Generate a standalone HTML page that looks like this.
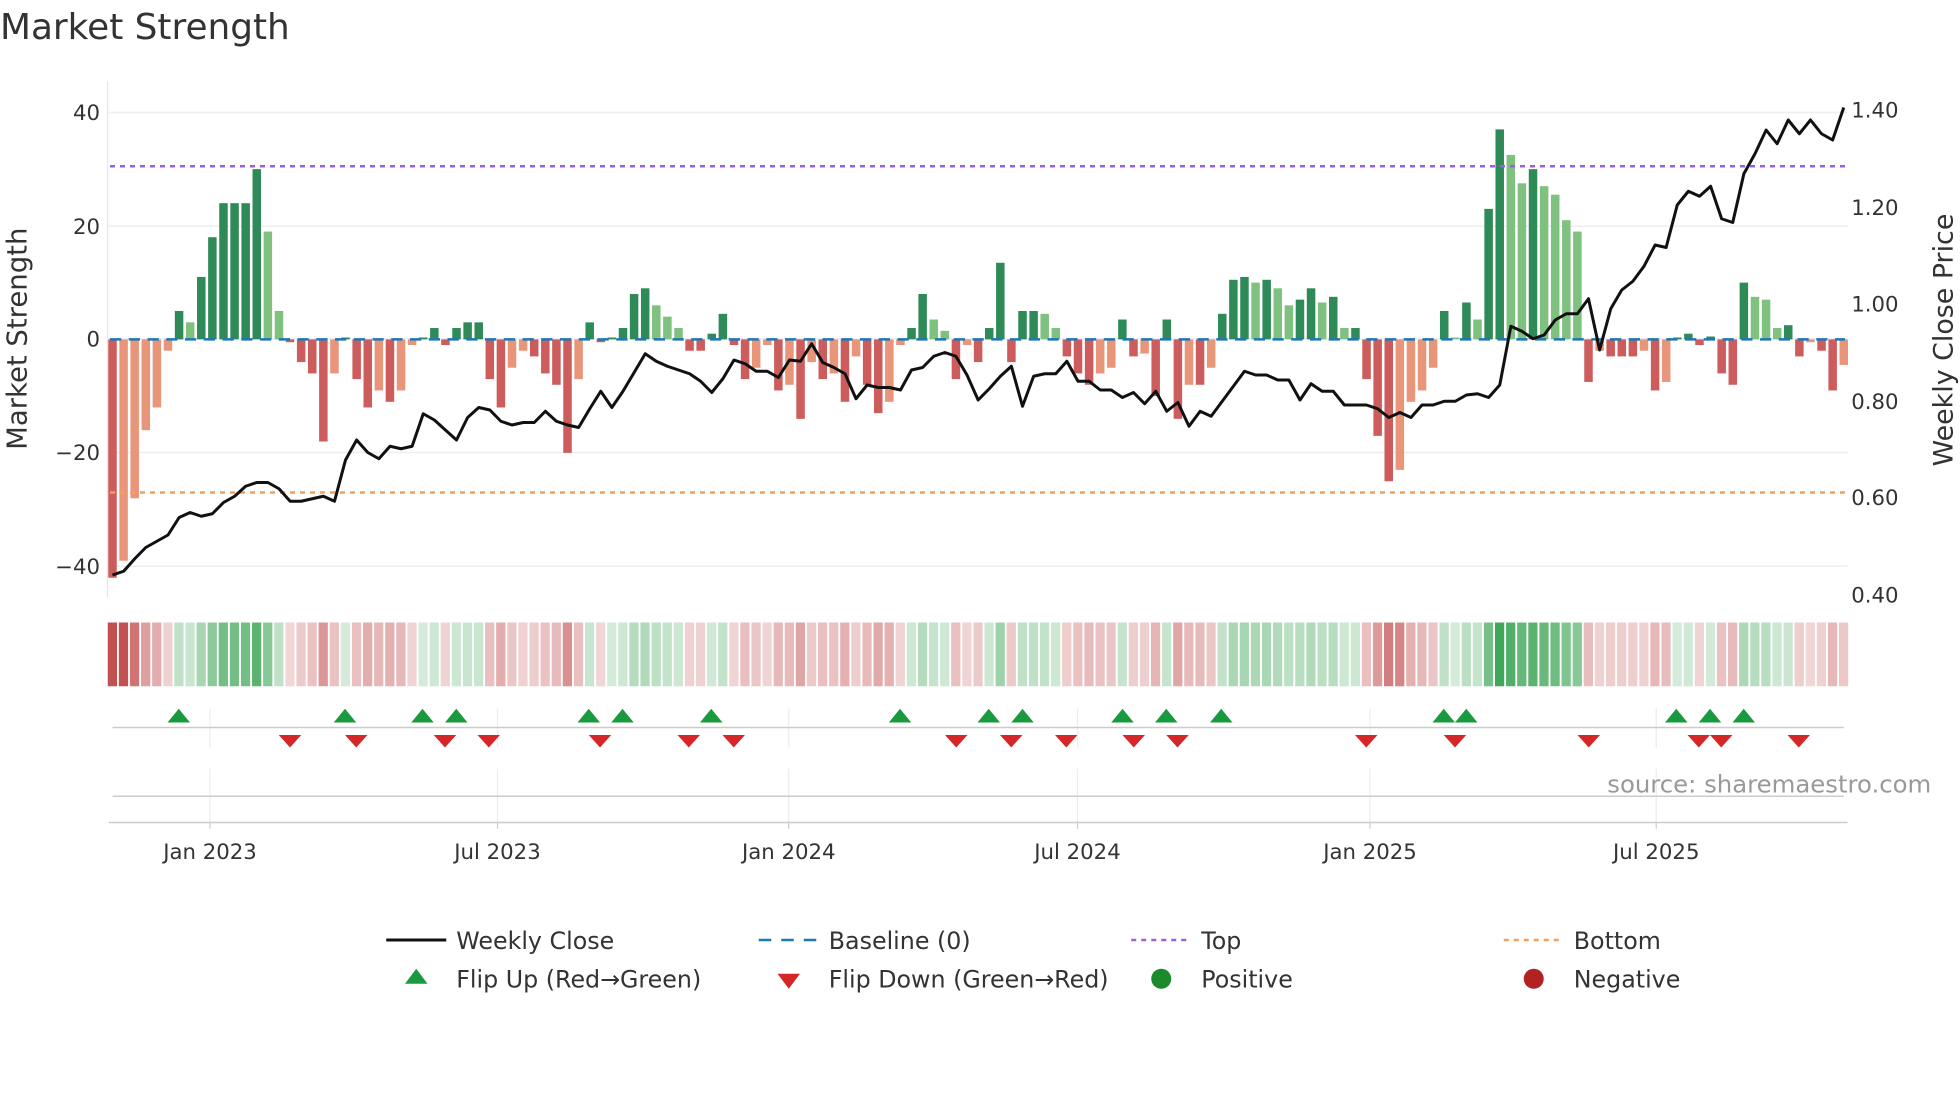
<!DOCTYPE html>
<html><head><meta charset="utf-8"><style>
html,body{margin:0;padding:0;background:#fff;width:1960px;height:1102px;overflow:hidden}
svg{display:block}
text{font-family:"DejaVu Sans","Liberation Sans",sans-serif;fill:#333}
</style></head><body>
<svg id="s" width="1960" height="1102" viewBox="0 0 1568 881.6" xmlns="http://www.w3.org/2000/svg">
<text x="0" y="31" font-size="28.7">Market Strength</text>
<g stroke="#eeeef3" stroke-width="1.2">
<line x1="87" y1="90" x2="1478" y2="90"/><line x1="87" y1="181" x2="1478" y2="181"/>
<line x1="87" y1="362" x2="1478" y2="362"/><line x1="87" y1="453" x2="1478" y2="453"/>
<line x1="87" y1="271" x2="1478" y2="271"/>
</g>
<line x1="86" y1="65" x2="86" y2="478" stroke="#e6e6ea" stroke-width="1"/>
<g id="bars"></g>
<line x1="88" y1="271.5" x2="1476" y2="271.5" stroke="#1f77b4" stroke-width="2" stroke-dasharray="9,6"/>
<line x1="88" y1="133" x2="1476" y2="133" stroke="#9b5fe0" stroke-width="2" stroke-dasharray="4,4"/>
<line x1="88" y1="394" x2="1476" y2="394" stroke="#f0a060" stroke-width="2" stroke-dasharray="4,4"/>
<polyline id="price" fill="none" stroke="#111" stroke-width="2.4" stroke-linejoin="round"/>
<g font-size="17">
<text x="80" y="96" text-anchor="end">40</text><text x="80" y="187" text-anchor="end">20</text>
<text x="80" y="277" text-anchor="end">0</text><text x="80" y="368" text-anchor="end">−20</text>
<text x="80" y="459" text-anchor="end">−40</text>
<text x="1481" y="94">1.40</text><text x="1481" y="172">1.20</text><text x="1481" y="249">1.00</text>
<text x="1481" y="327">0.80</text><text x="1481" y="404">0.60</text><text x="1481" y="482">0.40</text>
</g>
<text transform="translate(21,271) rotate(-90)" font-size="22" text-anchor="middle">Market Strength</text>
<text transform="translate(1562,272) rotate(-90)" font-size="21.5" text-anchor="middle">Weekly Close Price</text>
<g id="heat"></g>
<g stroke="#ececef" stroke-width="1">
<line x1="168" y1="567" x2="168" y2="598"/><line x1="398" y1="567" x2="398" y2="598"/><line x1="631" y1="567" x2="631" y2="598"/>
<line x1="862" y1="567" x2="862" y2="598"/><line x1="1096" y1="567" x2="1096" y2="598"/><line x1="1325" y1="567" x2="1325" y2="598"/>
<line x1="168" y1="615" x2="168" y2="658"/><line x1="398" y1="615" x2="398" y2="658"/><line x1="631" y1="615" x2="631" y2="658"/>
<line x1="862" y1="615" x2="862" y2="658"/><line x1="1096" y1="615" x2="1096" y2="658"/><line x1="1325" y1="615" x2="1325" y2="658"/>
</g>
<line x1="90" y1="582" x2="1475" y2="582" stroke="#ccc" stroke-width="1.2"/>
<line x1="90" y1="637" x2="1475" y2="637" stroke="#ccc" stroke-width="1.2"/>
<line x1="87" y1="658" x2="1478" y2="658" stroke="#ccc" stroke-width="1.2"/>
<g stroke="#ccc"><line x1="168" y1="658" x2="168" y2="663"/><line x1="398" y1="658" x2="398" y2="663"/><line x1="631" y1="658" x2="631" y2="663"/><line x1="862" y1="658" x2="862" y2="663"/><line x1="1096" y1="658" x2="1096" y2="663"/><line x1="1325" y1="658" x2="1325" y2="663"/></g>
<g id="marks"></g>
<text x="1545" y="634" font-size="19.5" fill="#999" style="fill:#999" text-anchor="end">source: sharemaestro.com</text>
<g font-size="17" text-anchor="middle">
<text x="168" y="687">Jan 2023</text><text x="398" y="687">Jul 2023</text><text x="631" y="687">Jan 2024</text>
<text x="862" y="687">Jul 2024</text><text x="1096" y="687">Jan 2025</text><text x="1325" y="687">Jul 2025</text>
</g>
<g font-size="19">
<line x1="309" y1="752" x2="357" y2="752" stroke="#111" stroke-width="2.4"/><text x="365" y="759">Weekly Close</text>
<line x1="607" y1="752" x2="655" y2="752" stroke="#1f77b4" stroke-width="2" stroke-dasharray="10,8"/><text x="663" y="759">Baseline (0)</text>
<line x1="905" y1="752" x2="953" y2="752" stroke="#9b5fe0" stroke-width="2" stroke-dasharray="4,4"/><text x="961" y="759">Top</text>
<line x1="1203" y1="752" x2="1251" y2="752" stroke="#f0a060" stroke-width="2" stroke-dasharray="4,4"/><text x="1259" y="759">Bottom</text>
<polygon points="324,787 333,775 342,787" fill="#1a9a3e"/><text x="365" y="790">Flip Up (Red→Green)</text>
<polygon points="622,779 640,779 631,791" fill="#d62728"/><text x="663" y="790">Flip Down (Green→Red)</text>
<circle cx="929" cy="783" r="8" fill="#1a8a2a"/><text x="961" y="790">Positive</text>
<circle cx="1227" cy="783" r="8" fill="#b22222"/><text x="1259" y="790">Negative</text>
</g>
</svg>
<script>
var v=[-42,-39,-28,-16,-12,-2,5,3,11,18,24,24,24,30,19,5,-0.5,-4,-6,-18,-6,0,-7,-12,-9,-11,-9,-1,0,2,-1,2,3,3,-7,-12,-5,-2,-3,-6,-8,-20,-7,3,-0.5,0,2,8,9,6,4,2,-2,-2,1,4.5,-1,-7,-5,-1,-9,-8,-14,-4,-7,-6,-11,-3,-8,-13,-11,-1,2,8,3.5,1.5,-7,-1,-4,2,13.5,-4,5,5,4.5,2,-3,-6,-8,-6,-5,3.5,-3,-2.5,-10,3.5,-14,-8,-8,-5,4.5,10.5,11,10,10.5,9,6,7,9,6.5,7.5,2,2,-7,-17,-25,-23,-11,-9,-5,5,0,6.5,3.5,23,37,32.5,27.5,30,27,25.5,21,19,-7.5,-2,-3,-3,-3,-2,-9,-7.5,0,1,-1,0.5,-6,-8,10,7.5,7,2,2.5,-3,-0.5,-2,-9,-4.5];
var p=[460,457,447,438,433,428,414,410,413,411,402,397,389,386,386,391,401,401,399,397,401,368,352,362,367,357,359,357,331,336,344,352,334,326,328,337,340,338,338,329,337,340,342,327,313,326,313,298,283,289,293,296,299,305,314,303,288,291,297,297,302,288,289,275,290,294,299,319,308,310,310,312,296,294,285,282,285,300,320,311,301,293,325,301,299,299,289,305,305,312,312,318,314,323,313,329,322,341,329,333,321,309,297,300,300,304,304,320,307,313,313,324,324,324,327,334,330,334,324,324,321,321,316,315,318,308,261,265,271,268,256,251,251,239,280,247,232,225,213,196,198,164,153,157,149,175,178,139,123,104,115,96,107,96,107,112,86];
var N=v.length,x0=90,dx=(1475-90)/(N-1),z=271.5,k=4.54,ns="http://www.w3.org/2000/svg";
function el(t,a,par){var e=document.createElementNS(ns,t);for(var q in a)e.setAttribute(q,a[q]);document.getElementById(par).appendChild(e);return e;}
for(var i=0;i<N;i++){var x=x0+i*dx,val=v[i],pv=i?v[i-1]:0,c;
 if(val>=0)c=(val>=pv)?"#2e8b57":"#7fc17f";else c=(val<=pv)?"#cd5c5c":"#e8957a";
 var h=Math.abs(val)*k; if(h<1.5)h=1.5;
 el("rect",{x:x-3.4,y:val>=0?z-h:z,width:6.8,height:h,fill:c},"bars");
 var t=Math.min(1,0.22+0.78*Math.abs(val)/38),r,g,b;
 if(val>=0){r=255+(60-255)*t;g=255+(165-255)*t;b=255+(85-255)*t;}else{r=255+(195-255)*t;g=255+(80-255)*t;b=255+(80-255)*t;}
 el("rect",{x:x-3.8,y:498,width:7.4,height:51,fill:"rgb("+(r|0)+","+(g|0)+","+(b|0)+")"},"heat");}
var pts=[];for(var i=0;i<p.length;i++)pts.push((x0+i*(1475-90)/(p.length-1)).toFixed(1)+","+p[i]);
document.getElementById("price").setAttribute("points",pts.join(" "));
var up=[143,276,338,365,471,498,569,720,791,818,898,933,977,1155,1173,1341,1368,1395];
var dn=[232,285,356,391,480,551,587,765,809,853,907,942,1093,1164,1271,1359,1377,1439];
up.forEach(function(x){el("polygon",{points:(x-9)+",578 "+x+",567 "+(x+9)+",578",fill:"#1a9a3e"},"marks");});
dn.forEach(function(x){el("polygon",{points:(x-9)+",588 "+(x+9)+",588 "+x+",598",fill:"#d62728"},"marks");});
</script>
</body></html>
